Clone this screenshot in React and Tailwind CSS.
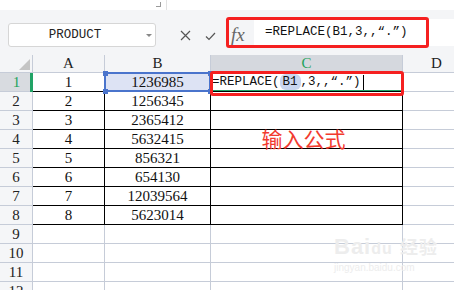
import React from 'react';

const serif = "font-['Liberation_Serif','Noto_Sans_CJK_SC',serif]";
const mono = "font-['Liberation_Mono','Noto_Sans_CJK_SC',monospace]";

const data = [
  [1, '1236985'],
  [2, '1256345'],
  [3, '2365412'],
  [4, '5632415'],
  [5, '856321'],
  [6, '654130'],
  [7, '12039564'],
  [8, '5623014'],
];

const HeaderCell = ({ children, active }) => (
  <div
    className={
      active
        ? 'h-[18px] border-r border-b border-[#c6ccd8] bg-[#d5d8de] text-[#1fa35c] flex items-center justify-center text-[15px] leading-none'
        : 'h-[18px] border-r border-b border-[#c6ccd8] flex items-center justify-center text-[15px] leading-none text-[#222]'
    }
  >
    {children}
  </div>
);

const RowHead = ({ n }) =>
  n === 1 ? (
    <div className="relative h-[19px] bg-[#d8dbe0] border-b border-[#c6ccd8] flex items-center justify-center text-[15px] text-[#1fa35c] leading-none">
      {n}
      <span className="absolute right-0 top-0 h-[19px] w-[3px] bg-[#21a366]"></span>
    </div>
  ) : (
    <div className="h-[19px] bg-[#f5f6f8] border-r border-b border-[#c6ccd8] flex items-center justify-center text-[15px] text-[#222] leading-none">
      {n}
    </div>
  );

const App = () => {
  const rows = [];
  for (let i = 1; i <= 12; i++) rows.push(i);

  return (
    <div className={`relative w-[454px] h-[290px] overflow-hidden bg-white ${serif}`}>
      {/* top strip */}
      <div className="h-[10px] bg-white flex">
        <div className="ml-[156px] mt-[2px] w-[5px] h-[5px] border-r border-b border-[#9a9a9a]"></div>
        <div className="ml-[5px] w-px h-[10px] bg-[#e2e2e2]"></div>
      </div>

      {/* formula toolbar */}
      <div className="h-[45px] bg-[#f4f5f7] flex items-start pl-[8px]">
        <div className="mt-[13px] w-[148px] h-[24px] bg-white border border-[#d6d6d6] rounded-[3px] flex items-center relative">
          <span className={`${mono} flex-1 text-center text-[12.5px] text-[#222] pr-[14px]`}>PRODUCT</span>
          <span className="absolute right-[3px] top-[10px] w-0 h-0 border-l-[3px] border-r-[3px] border-t-[3px] border-l-transparent border-r-transparent border-t-[#888]"></span>
        </div>
        <svg className="mt-[20px] ml-[24px]" width="11" height="11" viewBox="0 0 11 11">
          <path d="M1 1L10 10M10 1L1 10" stroke="#555" strokeWidth="1.2" fill="none" />
        </svg>
        <svg className="mt-[22px] ml-[14px]" width="11" height="9" viewBox="0 0 11 9">
          <path d="M1 4.5L4 7.5L10 1" stroke="#555" strokeWidth="1.2" fill="none" />
        </svg>
        <span className="mt-[15px] ml-[15px] w-[20px] italic text-[19px] leading-none text-[#666]">fx</span>
        <div className="mt-[9px] ml-[3px] flex-1 h-[27px] bg-white flex items-center pl-[11px]">
          <span className={`${mono} text-[12.5px] text-[#111]`}>=REPLACE(B1,3,,“.”)</span>
        </div>
      </div>

      {/* sheet */}
      <div className="grid grid-cols-[33px_72px_106px_192px_68px] bg-white">
        {/* header row */}
        <div className="h-[18px] bg-[#f4f5f7] border-r border-b border-[#c6ccd8] flex items-end justify-end pr-[2px] pb-[2px]">
          <svg width="11" height="11" viewBox="0 0 11 11">
            <path d="M11 0L11 11L0 11Z" fill="#c4c4c4" />
          </svg>
        </div>
        <div className="bg-[#f4f5f7]"><HeaderCell>A</HeaderCell></div>
        <div className="bg-[#f4f5f7]"><HeaderCell>B</HeaderCell></div>
        <HeaderCell active>C</HeaderCell>
        <div className="bg-[#f4f5f7]"><HeaderCell>D</HeaderCell></div>

        {rows.map((r) => {
          const d = data[r - 1];
          const inTable = r <= 8;
          const line = inTable ? 'border-black' : 'border-[#c6ccd8]';
          return (
            <React.Fragment key={r}>
              <RowHead n={r} />
              <div className={`h-[19px] border-r border-b ${line} flex items-center justify-center text-[15px] leading-none text-[#111]`}>
                {d ? d[0] : ''}
              </div>
              {r === 1 ? (
                <div className="relative h-[19px] border-r border-b border-black bg-[#dde3f4] flex items-center justify-center text-[15px] leading-none text-[#111]">
                  {d[1]}
                  <span className="absolute -left-px -top-px w-[107px] h-[20px] border-2 border-[#4a74cc]"></span>
                  <span className="absolute -left-[2px] -top-[2px] w-[5px] h-[5px] bg-[#4a74cc]"></span>
                  <span className="absolute -right-[3px] -top-[2px] w-[5px] h-[5px] bg-[#4a74cc]"></span>
                  <span className="absolute -left-[2px] -bottom-[3px] w-[5px] h-[5px] bg-[#4a74cc]"></span>
                  <span className="absolute -right-[3px] -bottom-[3px] w-[5px] h-[5px] bg-[#4a74cc]"></span>
                </div>
              ) : (
                <div className={`h-[19px] border-r border-b ${line} flex items-center justify-center text-[15px] leading-none text-[#111]`}>
                  {d ? d[1] : ''}
                </div>
              )}
              {r === 1 ? (
                <div className="relative h-[19px] border-r border-b border-black flex items-center pl-[1px]">
                  <span className="absolute inset-0 border border-[#21a366]"></span>
                  <span className={`${mono} text-[12.5px] leading-none text-[#111] flex items-center whitespace-nowrap`}>
                    =REPLACE(
                    <span className="bg-[#c9d6f0] rounded-[6px] px-[3px] py-[2px]">B1</span>
                    ,3,,“.”)
                  </span>
                  <span className="ml-[2px] w-px h-[15px] bg-black"></span>
                </div>
              ) : r === 4 ? (
                <div className="h-[19px] border-r border-b border-black flex items-center justify-center overflow-visible">
                  <span className="text-[21px] leading-none text-[#f23a2e] font-['Noto_Sans_CJK_SC',sans-serif] -mt-[2px] relative z-10 pr-[6px]">输入公式</span>
                </div>
              ) : (
                <div className={`h-[19px] border-r border-b ${line}`}></div>
              )}
              <div className="h-[19px] border-r border-b border-[#c6ccd8]"></div>
            </React.Fragment>
          );
        })}
      </div>

      {/* red annotation boxes */}
      <div className="absolute left-[226px] top-[17px] w-[203px] h-[31px] border-[3px] border-[#f52020] rounded-[3px]"></div>
      <div className="absolute left-[210px] top-[71px] w-[194px] h-[25px] border-[3px] border-[#f52020] rounded-[3px]"></div>

      {/* watermark */}
      <div className="absolute left-[334px] top-[236px] flex flex-col items-start text-[#ededed] font-['Liberation_Sans',sans-serif] pointer-events-none">
        <span className="text-[22px] font-bold leading-none tracking-[1px]">Bai<span className="text-[16px]">du</span> <span className="font-['Noto_Sans_CJK_SC',sans-serif] text-[18px]">经验</span></span>
        <span className="text-[10px] leading-none mt-[5px]">jingyan.baidu.com</span>
      </div>
    </div>
  );
};

export default App;
